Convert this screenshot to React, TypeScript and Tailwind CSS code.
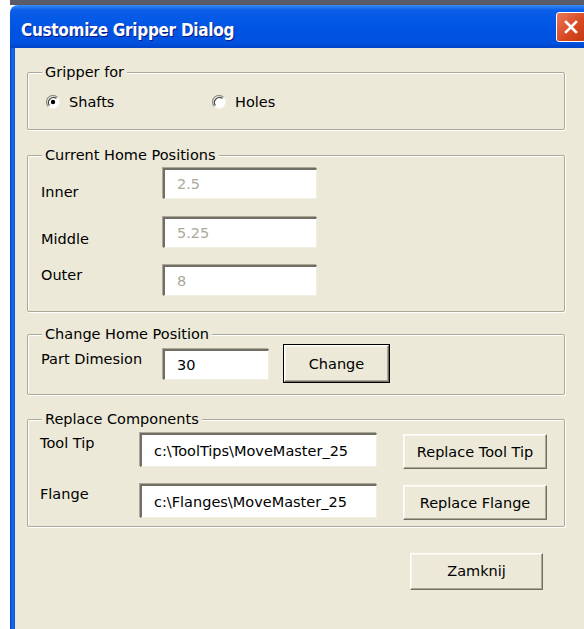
import type { ReactNode } from 'react'

const FONT = { fontFamily: '"DejaVu Sans", Verdana, sans-serif' }

// etched frame with a caption sitting on the top edge
function Group({ title, className, children }: { title: string; className: string; children: ReactNode }) {
  return (
    <div
      className={`relative w-[538px] border border-[#aca899] rounded-[2px] shadow-[1px_1px_0_#fff,inset_1px_1px_0_#fff] ${className}`}
    >
      <span className="absolute -top-[10px] left-[14px] bg-[#ece9d8] px-[3px] leading-[18px]">{title}</span>
      {children}
    </div>
  )
}

function Radio({ checked }: { checked?: boolean }) {
  return (
    <svg width="14" height="14" viewBox="0 0 14 14" className="shrink-0">
      <circle cx="7" cy="7" r="6.5" fill="#fff" />
      <path d="M11.6 2.4 A6.5 6.5 0 0 0 2.4 11.6" fill="none" stroke="#8d8a7e" strokeWidth="1.2" />
      <path d="M10.5 3.5 A5 5 0 0 0 3.5 10.5" fill="none" stroke="#4a4840" strokeWidth="1.2" />
      <path d="M2.4 11.6 A6.5 6.5 0 0 0 11.6 2.4" fill="none" stroke="#f4f3ec" strokeWidth="1" />
      {checked && <circle cx="7" cy="7" r="2.2" fill="#000" />}
    </svg>
  )
}

function Field({ value, disabled, className }: { value: string; disabled?: boolean; className: string }) {
  return (
    <div
      className={`flex items-center bg-white border-t-2 border-l-2 border-b border-r border-t-[#716f64] border-l-[#716f64] border-b-[#f1efe2] border-r-[#f1efe2] shadow-[-1px_-1px_0_#aca899] pl-[12px] whitespace-nowrap ${
        disabled ? 'text-[#aca899]' : 'text-black'
      } ${className}`}
    >
      {value}
    </div>
  )
}

function Button({ label, isDefault, className }: { label: string; isDefault?: boolean; className: string }) {
  return (
    <div className={`${isDefault ? 'border border-black' : ''} ${className}`}>
      <div className="h-full flex items-center justify-center whitespace-nowrap bg-[#ece9d8] border border-t-white border-l-white border-b-[#716f64] border-r-[#716f64] shadow-[inset_-1px_-1px_0_#aca899,inset_1px_1px_0_#f6f5ee]">
        {label}
      </div>
    </div>
  )
}

export default function App() {
  return (
    <div className="w-[584px] h-[629px] overflow-hidden bg-white text-[14.5px] text-black" style={FONT}>
      <div className="ml-[10px] h-[5px] bg-[#5a5b66]" />
      <div className="ml-[10px] w-[600px] h-[624px] flex flex-col">
        {/* title bar */}
        <div className="h-[43px] shrink-0 rounded-tl-[8px] bg-[linear-gradient(#3a8cf8_0%,#0a5ee8_12%,#0055e5_50%,#0051de_88%,#0044c8_100%)] flex items-center pl-[11px]">
          <span
            className="text-white font-bold text-[17px] tracking-[-0.3px] [text-shadow:1px_1px_0_#0a1883] mt-[9px]"
            style={{ fontFamily: '"DejaVu Sans Condensed", "DejaVu Sans", sans-serif' }}
          >
            Customize Gripper Dialog
          </span>
          <div className="ml-auto mr-[24px] w-[30px] h-[30px] rounded-[3px] border border-white bg-[linear-gradient(135deg,#e9785a,#d8461f_60%,#c13a14)] flex items-center justify-center">
            <svg width="16" height="16" viewBox="0 0 16 16">
              <path d="M3 3 L13 13 M13 3 L3 13" stroke="#fff" strokeWidth="2.6" strokeLinecap="square" />
            </svg>
          </div>
        </div>

        {/* client area */}
        <div className="flex-1 flex">
          <div className="w-[5px] bg-[linear-gradient(90deg,#0843c4,#166aee_50%,#0a58e0)]" />
          <div className="flex-1 bg-[#ece9d8] pl-[12px] pt-[24px]">
            <Group title="Gripper for" className="h-[58px]">
              <div className="flex items-center mt-[21px] leading-4">
                <div className="flex items-center w-[184px] pl-[18px]">
                  <Radio checked />
                  <span className="ml-[9px]">Shafts</span>
                </div>
                <Radio />
                <span className="ml-[9px]">Holes</span>
              </div>
            </Group>

            <Group title="Current Home Positions" className="h-[157px] mt-[25px]">
              <div className="flex flex-col pl-[13px] pt-[12px] leading-4">
                <div className="flex items-start">
                  <span className="w-[122px] mt-[16px]">Inner</span>
                  <Field value="2.5" disabled className="w-[154px] h-[31px]" />
                </div>
                <div className="flex items-start mt-[17px]">
                  <span className="w-[122px] mt-[14px]">Middle</span>
                  <Field value="5.25" disabled className="w-[154px] h-[31px]" />
                </div>
                <div className="flex items-start mt-[17px]">
                  <span className="w-[122px] mt-[2px]">Outer</span>
                  <Field value="8" disabled className="w-[154px] h-[31px]" />
                </div>
              </div>
            </Group>

            <Group title="Change Home Position" className="h-[61px] mt-[22px]">
              <div className="flex items-start pl-[13px] pt-[9px] leading-4">
                <span className="w-[122px] mt-[7px] whitespace-nowrap">Part Dimesion</span>
                <Field value="30" className="w-[106px] h-[31px] mt-[5px]" />
                <Button label="Change" isDefault className="w-[107px] h-[39px] ml-[14px]" />
              </div>
            </Group>

            <Group title="Replace Components" className="h-[108px] mt-[24px]">
              <div className="flex flex-col pl-[12px] pt-[13px] leading-4">
                <div className="flex items-start">
                  <span className="w-[100px] mt-[2px]">Tool Tip</span>
                  <Field value="c:\ToolTips\MoveMaster_25" className="w-[237px] h-[34px]" />
                  <Button label="Replace Tool Tip" className="w-[144px] h-[35px] ml-[26px] mt-[1px]" />
                </div>
                <div className="flex items-start mt-[15px]">
                  <span className="w-[100px] mt-[2px]">Flange</span>
                  <Field value="c:\Flanges\MoveMaster_25" className="w-[237px] h-[34px]" />
                  <Button label="Replace Flange" className="w-[144px] h-[35px] ml-[26px] mt-[1px]" />
                </div>
              </div>
            </Group>

            <div className="w-[538px] flex justify-end mt-[26px] pr-[22px]">
              <Button label="Zamknij" className="w-[133px] h-[37px]" />
            </div>
          </div>
        </div>
      </div>
    </div>
  )
}
